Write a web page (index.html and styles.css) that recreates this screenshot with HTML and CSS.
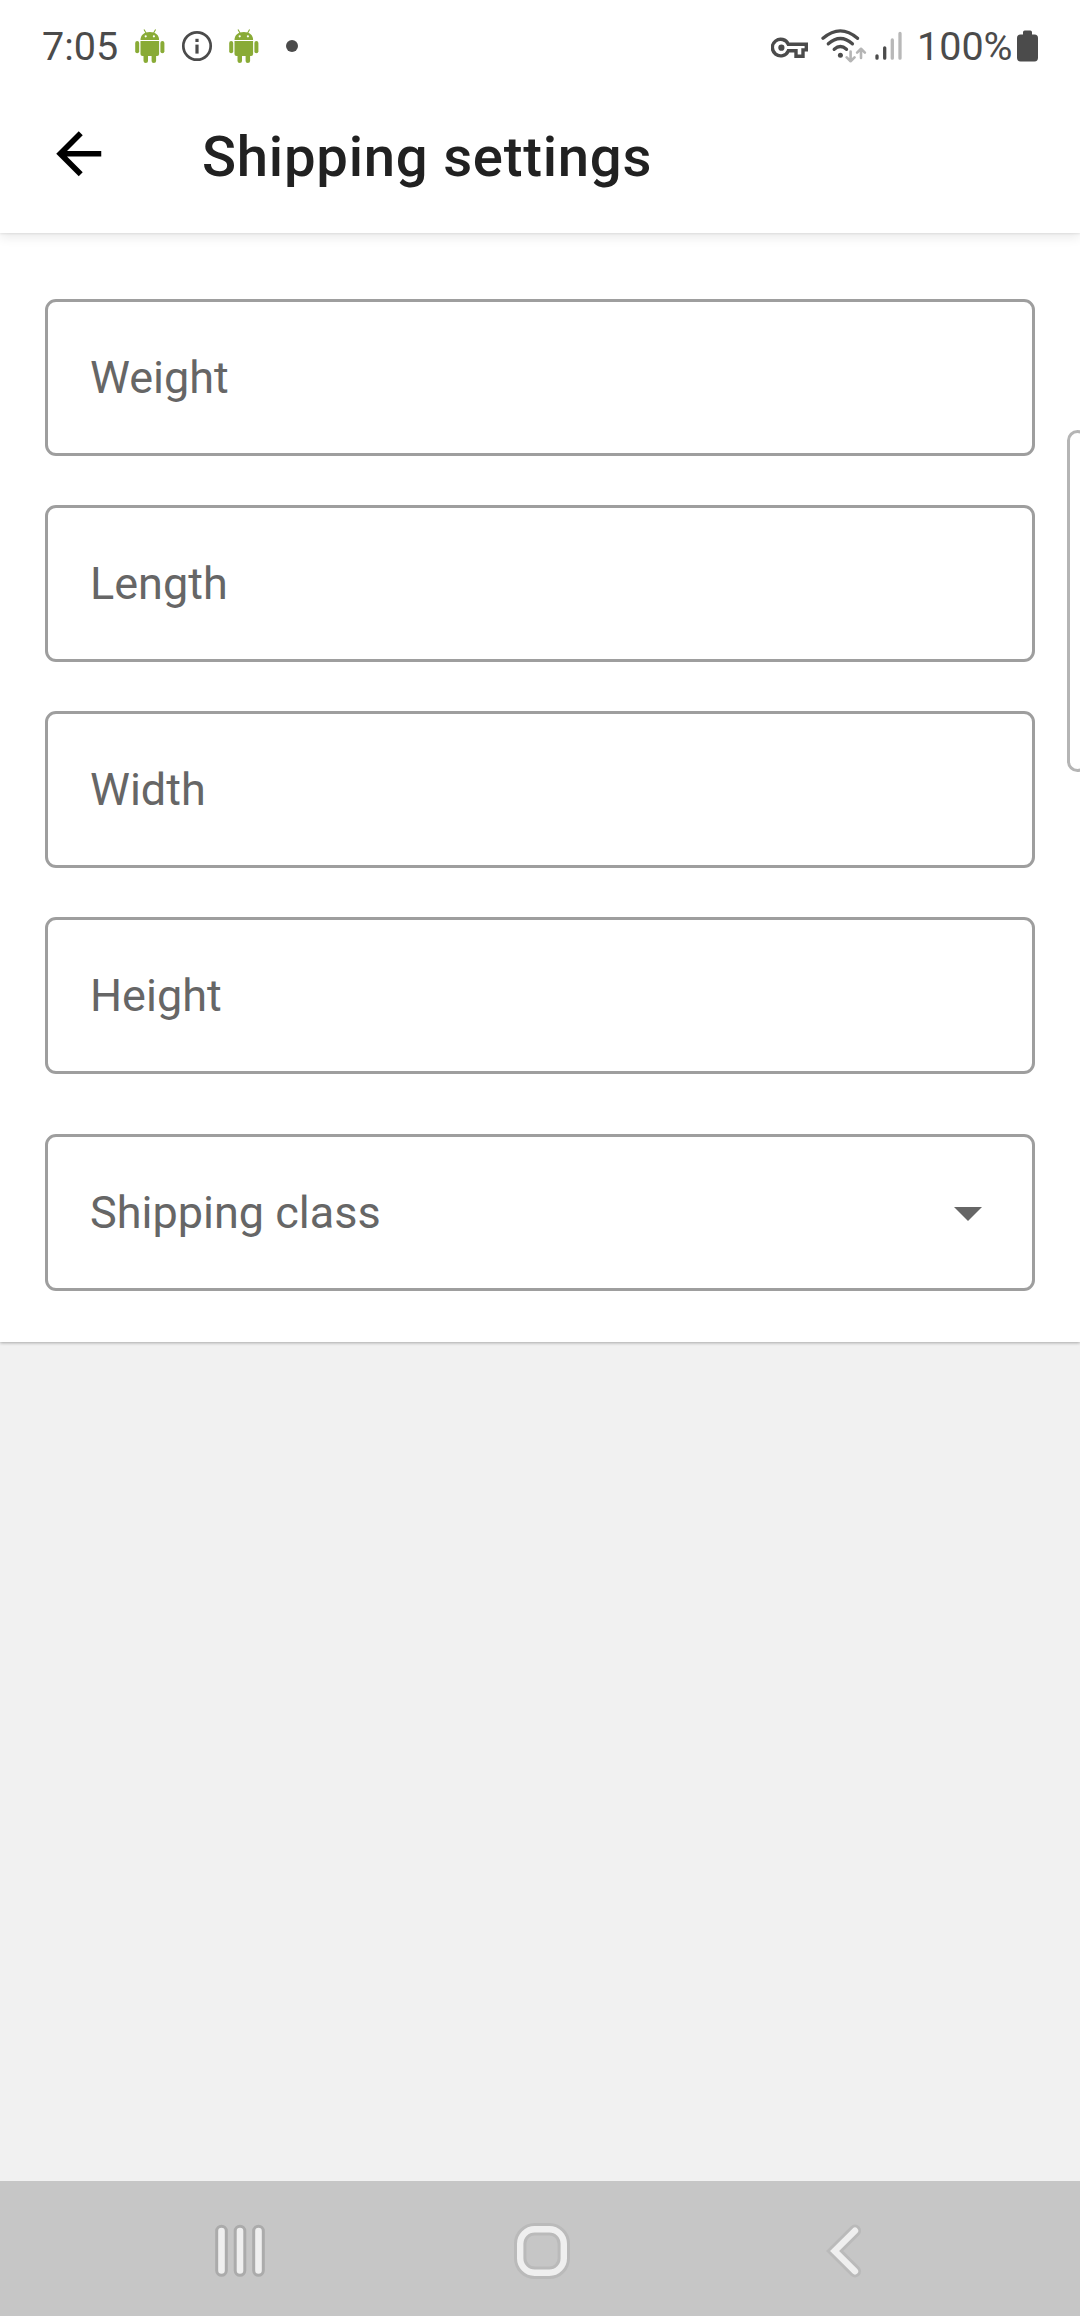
FILE: index.html
```
<!DOCTYPE html>
<html lang="en">
<head>
<meta charset="utf-8">
<title>Shipping settings</title>
<link rel="stylesheet" href="styles.css">
</head>
<body>
<div class="screen">
  <header class="top">
    <div class="status">
      <div class="status-left">
        <span class="time">7:05</span>
        <svg class="android" viewBox="0 0 30 34"><use href="#robot"/></svg>
        <svg class="info" viewBox="0 0 32 32" fill="#4b4b4b"><circle cx="16" cy="16" r="13.7" fill="none" stroke="#4b4b4b" stroke-width="2.7"/><rect x="14.4" y="14.6" width="3.2" height="9"/><rect x="14.4" y="8.8" width="3.2" height="3.2"/></svg>
        <svg class="android" viewBox="0 0 30 34"><use href="#robot"/></svg>
        <span class="more"></span>
      </div>
      <div class="status-right">
        <svg class="key" viewBox="0 0 38 22"><path d="M17.3 7.3H35.3V12.9H32V19.3H25V13.8H17.3A8.3 8.3 0 1 1 17.3 7.3Z" fill="none" stroke="#4b4b4b" stroke-width="3.4"/><circle cx="10.4" cy="10.7" r="3.1" fill="#4b4b4b"/></svg>
        <svg class="wifi" viewBox="0 0 46 34"><g fill="none" stroke="#4b4b4b" stroke-width="3.3" stroke-linecap="round"><path d="M2 9.3Q19.4-5.5 36.5 9.3"/><path d="M7.3 14.8Q19.4 4.2 31.4 14.8"/><path d="M13.2 20.3Q19.4 14.8 25.5 20.3"/></g><circle cx="19.4" cy="26.2" r="2.5" fill="#4b4b4b"/><g fill="none" stroke="#b5b5b5" stroke-width="2.6" stroke-linecap="round" stroke-linejoin="round"><path d="M29.6 22.6V32.2M25.7 28.4L29.6 32.2L33.5 28.4"/><path d="M40 29V19.8M36.1 23.6L40 19.8L43.9 23.6"/></g></svg>
        <svg class="signal" viewBox="0 0 28 30"><g stroke-width="3.3" stroke-linecap="round"><path d="M2 24.8V27.2M9.7 16.8V27.2" stroke="#4b4b4b"/><path d="M17.3 9V27.2M25 2.5V27.2" stroke="#b8b8b8"/></g></svg>
        <span class="percent">100%</span>
        <svg class="battery" viewBox="0 0 21 32"><path d="M6 2.2Q6 .5 7.7 .5H13.3Q15 .5 15 2.2V4.5H17.5Q21 4.5 21 8V27.8Q21 31.4 17.5 31.4H3.5Q0 31.4 0 27.8V8Q0 4.5 3.5 4.5H6Z" fill="#4b4b4b"/></svg>
      </div>
    </div>
    <div class="appbar">
      <svg class="back" viewBox="0 0 24 24"><path d="M20 11H7.83l5.59-5.59L12 4l-8 8 8 8 1.41-1.41L7.83 13H20z"/></svg>
      <h1 class="title">Shipping settings</h1>
    </div>
  </header>
  <main class="card">
    <div class="field">Weight</div>
    <div class="field">Length</div>
    <div class="field">Width</div>
    <div class="field">Height</div>
    <div class="field select">Shipping class
      <svg class="caret" viewBox="0 0 28 14"><path d="M0 0H28L14 14Z" fill="#666"/></svg>
    </div>
  </main>
  <nav class="navbar">
    <svg class="recents" viewBox="0 0 50 54"><g stroke-linecap="round"><path d="M6.5 7V46.5M25 7V46.5M43.5 7V46.5" stroke="#ababab" stroke-width="12.6"/><path d="M6.5 7V46.5M25 7V46.5M43.5 7V46.5" stroke="#efefef" stroke-width="6.6"/></g></svg>
    <svg class="home" viewBox="0 0 56 56" fill="none"><rect x="6.2" y="6.2" width="43.6" height="43.6" rx="14.5" stroke="#bababa" stroke-width="12.4"/><rect x="6.2" y="6.2" width="43.6" height="43.6" rx="14.5" stroke="#efefef" stroke-width="6.4"/></svg>
    <svg class="prev" viewBox="0 0 36 54" fill="none" stroke-linecap="round"><path d="M29 6.7L8.6 27L29 47.3" stroke="#bababa" stroke-width="12.2"/><path d="M29 6.7L8.6 27L29 47.3" stroke="#efefef" stroke-width="6.4"/></svg>
  </nav>
  <div class="edge-handle"></div>
</div>
<svg width="0" height="0" class="defs">
  <symbol id="robot" viewBox="0 0 30 34"><g fill="#89ab36"><path d="M5.5 11C5.5 6 9 3 14.8 3S24.1 6 24.1 11Z"/><path d="M5.5 12H24.1V25Q24.1 27 22.1 27H7.5Q5.5 27 5.5 25Z"/><rect x=".2" y="12" width="4" height="12.3" rx="2"/><rect x="25.4" y="12" width="4" height="12.3" rx="2"/><path d="M8.5 26H13V32Q13 34 10.8 34T8.5 32ZM16.6 26H21.1V32Q21.1 34 18.8 34T16.6 32Z"/><path d="M9 .5L11 4M20.6 .5L18.6 4" stroke="#89ab36" stroke-width="1.1"/></g><circle cx="10.7" cy="7.3" r="1.1" fill="#fff"/><circle cx="18.9" cy="7.3" r="1.1" fill="#fff"/></symbol>
</svg>
</body>
</html>
```
FILE: styles.css
```
* { box-sizing: border-box; }
body { margin: 0; font-family: Roboto, sans-serif; }
svg { display: block; flex: none; }
.defs { position: absolute; }
.screen {
  position: relative;
  display: flex;
  flex-direction: column;
  width: 1080px;
  height: 2316px;
  overflow: hidden;
  background: #f1f1f1;
}
.top {
  position: relative;
  z-index: 1;
  height: 233px;
  background: #fff;
  box-shadow: 0 1px 2px rgba(0, 0, 0, .08), 0 4px 11px rgba(0, 0, 0, .09);
}
.status {
  display: flex;
  justify-content: space-between;
  height: 92px;
  padding: 0 42px;
  color: #4b4b4b;
  font-size: 40px;
  line-height: 92px;
}
.status-left, .status-right { display: flex; align-items: center; }
.time { width: 93px; padding-top: 1px; font-size: 39.5px; }
.android { width: 30px; height: 34px; }
.info { width: 32px; height: 32px; margin: 0 16px; }
.more { width: 12px; height: 12px; margin-left: 27px; border-radius: 50%; background: #4b4b4b; }
.key { width: 38px; height: 22px; margin: 3px 12px 0 0; }
.wifi { width: 46px; height: 34px; margin-right: 8px; }
.signal { width: 28px; height: 30px; margin-right: 14px; }
.percent { width: 100px; padding-top: 1px; font-size: 39.5px; }
.battery { width: 21px; height: 32px; }
.appbar { display: flex; align-items: center; height: 128px; padding-left: 45px; }
.back { width: 67.5px; height: 67.5px; margin-bottom: 4px; }
.title {
  margin: 1px 0 0 89.5px;
  color: #212121;
  font-size: 56.25px;
  font-weight: 500;
  line-height: 66px;
  letter-spacing: .75px;
}
.card {
  display: flex;
  flex-direction: column;
  gap: 49px;
  height: 1109px;
  padding: 66px 45px 0;
  background: #fff;
  box-shadow: 0 1px 3px rgba(0, 0, 0, .3);
}
.field {
  display: flex;
  align-items: center;
  justify-content: space-between;
  height: 157px;
  padding: 0 42px;
  border: 3px solid #9e9e9e;
  border-radius: 11px;
  color: #666;
  font-size: 45px;
}
.select { margin-top: 11px; padding-right: 50px; }
.caret { width: 28px; height: 14px; margin-top: 3px; }
.navbar {
  display: flex;
  align-items: center;
  height: 135px;
  margin-top: auto;
  padding: 4px 0 0 215px;
  background: #c6c6c6;
}
.recents { width: 50px; height: 54px; }
.home { width: 56px; height: 56px; margin-left: 249px; }
.prev { width: 36px; height: 54px; margin-left: 256px; }
.edge-handle {
  position: absolute;
  top: 430px;
  right: -8px;
  width: 21px;
  height: 342px;
  border: 3px solid #b5b5b5;
  border-radius: 13px;
  background: #fff;
}
```
